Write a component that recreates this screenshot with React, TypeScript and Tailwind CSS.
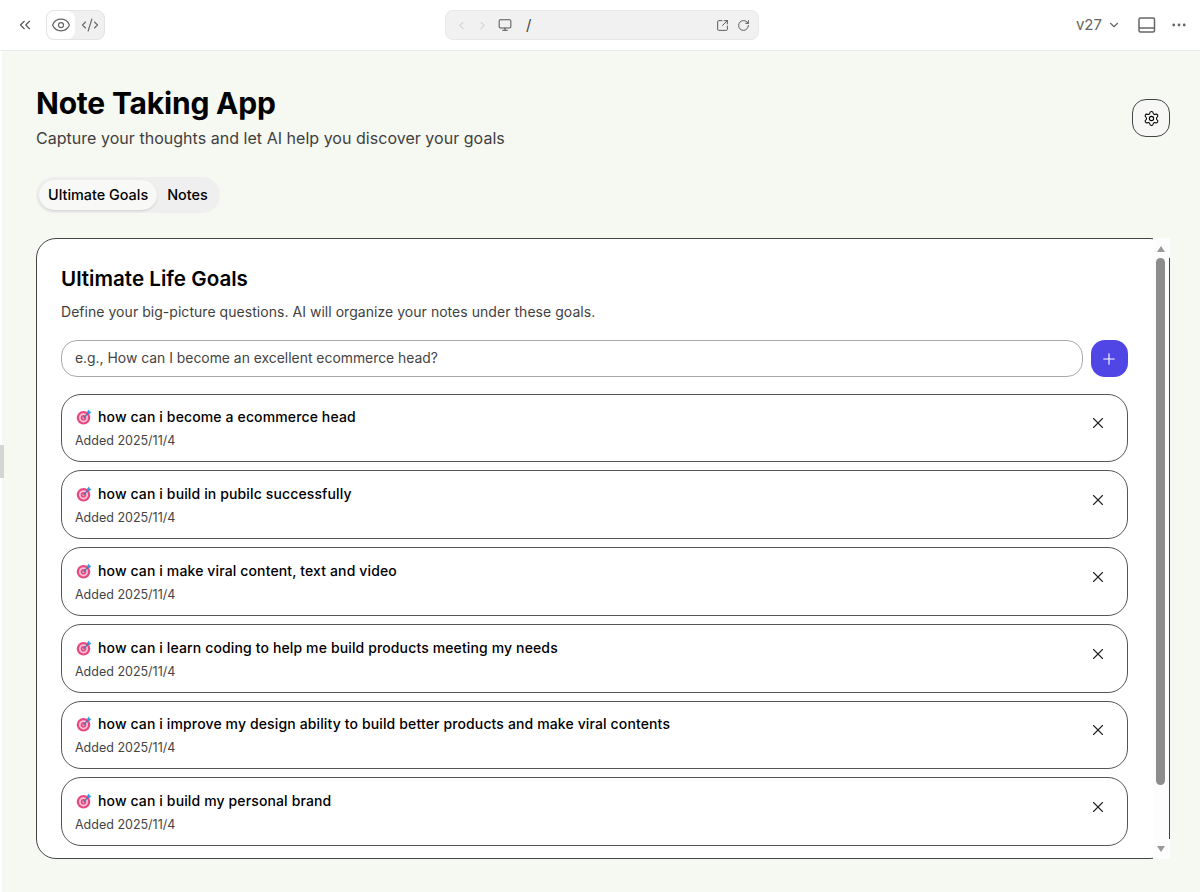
import { ChevronsLeft, Eye, CodeXml, ChevronLeft, ChevronRight, Monitor, SquareArrowOutUpRight, RotateCw, ChevronDown, Ellipsis, Settings, Plus, X } from "lucide-react";

const goals = [
  "how can i become a ecommerce head",
  "how can i build in pubilc successfully",
  "how can i make viral content, text and video",
  "how can i learn coding to help me build products meeting my needs",
  "how can i improve my design ability to build better products and make viral contents",
  "how can i build my personal brand",
];

function DartIcon() {
  return (
    <svg width="16" height="16" viewBox="0 0 16 16" className="ml-[1px] shrink-0">
      <circle cx="7.5" cy="8.8" r="6.8" fill="#e8487f" />
      <circle cx="7.5" cy="8.8" r="4.6" fill="#f7c3d6" />
      <circle cx="7.5" cy="8.8" r="2.8" fill="#e8487f" />
      <circle cx="7.5" cy="8.8" r="1.1" fill="#f7c3d6" />
      <path d="M7.5 8.8 13 3.2" stroke="#3f6fa8" strokeWidth="1.2" />
      <path d="M11.2 2.6 13 .6l.6 1.9 1.9.5-2 1.9-2.4-.5z" fill="#2f9be0" />
    </svg>
  );
}

function GoalRow({ title }: { title: string }) {
  return (
    <div className="flex h-[68.75px] items-center justify-between rounded-[20px] border border-[#555] bg-white pl-[13px] pr-[20px]">
      <div className="pt-[2px]">
        <div className="flex items-center gap-[6px] text-[14px] leading-[22px] font-medium tracking-[0.13px] text-black">
          <DartIcon />
          <span>{title}</span>
        </div>
        <div className="mt-[3px] text-[12.5px] leading-[20px] text-[#444]">Added 2025/11/4</div>
      </div>
      <X size={18} strokeWidth={1.5} className="mb-[9px] text-[#222]" />
    </div>
  );
}

function Toolbar() {
  return (
    <div className="grid h-[51px] grid-cols-[1fr_314px_1fr] items-center border-b border-[#ececec] bg-white pl-[16px] pr-[12px] text-[#666]">
      <div className="flex items-center gap-[12px]">
        <ChevronsLeft size={18} strokeWidth={1.5} className="text-[#555]" />
        <div className="flex h-[30px] rounded-lg border border-[#e4e4e4] bg-[#f0f0f0]">
          <div className="flex w-[28px] items-center justify-center rounded-lg bg-white">
            <Eye size={20} strokeWidth={1.5} />
          </div>
          <div className="flex w-[29px] items-center justify-center">
            <CodeXml size={18} strokeWidth={1.5} />
          </div>
        </div>
      </div>
      <div className="flex h-[30px] items-center rounded-lg border border-[#e8e8e8] bg-[#f1f1f1] pl-[9px] pr-[8px]">
        <ChevronLeft size={13} strokeWidth={1.5} className="text-[#bbb]" />
        <ChevronRight size={13} strokeWidth={1.5} className="ml-[8px] text-[#bbb]" />
        <Monitor size={14} strokeWidth={1.75} className="ml-[9px] text-[#555]" />
        <span className="ml-[14px] text-[15px] text-[#444]">/</span>
        <SquareArrowOutUpRight size={13} strokeWidth={1.75} className="ml-auto text-[#555]" />
        <RotateCw size={13} strokeWidth={1.75} className="ml-[8px] text-[#555]" />
      </div>
      <div className="flex items-center justify-end">
        <span className="text-[15px]">v27</span>
        <ChevronDown size={14} strokeWidth={2} className="ml-[5px]" />
        <svg width="18" height="16" viewBox="0 0 18 16" fill="none" stroke="currentColor" strokeWidth="1.5" className="ml-[17px]">
          <rect x="1" y="1" width="15.5" height="14" rx="1.5" />
          <path d="M1 11h15.5" />
        </svg>
        <Ellipsis size={18} strokeWidth={1.75} className="ml-[14px]" />
      </div>
    </div>
  );
}

function Scrollbar() {
  return (
    <div className="absolute top-[-1px] right-[-1px] bottom-[-1px] flex w-[17px] flex-col bg-[#fdfdfd]">
      <div className="flex h-[20px] items-center justify-center pr-[2px] pt-[1px]">
        <div className="h-0 w-0 border-x-[4px] border-b-[6px] border-x-transparent border-b-[#999]" />
      </div>
      <div className="flex-1 border-r border-[#444] pr-[2px] pb-[54px]">
        <div className="mx-auto h-full w-[9px] rounded-full bg-[#8c8c8c]" />
      </div>
      <div className="flex h-[20px] items-center justify-center pr-[2px] pb-[1px]">
        <div className="h-0 w-0 border-x-[4px] border-t-[6px] border-x-transparent border-t-[#999]" />
      </div>
    </div>
  );
}

export default function App() {
  return (
    <div className="h-[892px] overflow-hidden bg-white font-['Inter',sans-serif]">
      <Toolbar />
      <div className="relative ml-[2px] h-[841px] bg-[#f6f8f2] pl-[34px] pr-[30px] pt-[34px]">
        <div className="absolute top-[394px] left-[-2px] h-[33px] w-[4px] bg-[#d4d4d4]" />
        <div className="flex items-start justify-between">
          <div>
            <h1 className="text-[30px] leading-[36px] font-bold tracking-[-0.2px] text-black">Note Taking App</h1>
            <p className="mt-[5px] text-base leading-[24px] tracking-[0.03px] text-[#3f3f3f]">
              Capture your thoughts and let AI help you discover your goals
            </p>
          </div>
          <div className="mt-[14px] flex h-[38px] w-[38px] items-center justify-center rounded-[14px] border border-[#444] bg-[#f7f8f5]">
            <Settings size={17} strokeWidth={1.5} className="text-black" />
          </div>
        </div>
        <div className="mt-[27px] flex h-[36px] w-fit items-center rounded-[18px] bg-[#efeff0] pl-[3px] pr-[12px] text-[14.4px] font-medium text-black">
          <div className="flex h-[30px] items-center rounded-[15px] bg-[#f8f9f6] px-[9px] shadow-sm">Ultimate Goals</div>
          <div className="ml-[10px]">Notes</div>
        </div>
        <div className="relative mt-[25px] h-[621px] rounded-[20px] border border-[#444] bg-white pl-[24px] pr-[41px] pt-[26px]">
          <h2 className="text-[20.6px] leading-[28px] font-semibold text-black">Ultimate Life Goals</h2>
          <p className="mt-[9px] text-sm leading-[20px] tracking-[0.04px] text-[#3f3f3f]">
            Define your big-picture questions. AI will organize your notes under these goals.
          </p>
          <div className="mt-[18px] flex gap-[8px]">
            <div className="flex h-[37px] flex-1 items-center rounded-[16px] border border-[#aaa] bg-white px-[13px] text-[13.9px] text-[#444]">
              e.g., How can I become an excellent ecommerce head?
            </div>
            <div className="flex h-[37px] w-[37.5px] items-center justify-center rounded-[14px] bg-[#4f46e5]">
              <Plus size={18} strokeWidth={1.5} className="text-white" />
            </div>
          </div>
          <div className="mt-[16.5px] flex flex-col gap-[8px]">
            {goals.map((g) => (
              <GoalRow key={g} title={g} />
            ))}
          </div>
          <Scrollbar />
        </div>
      </div>
    </div>
  );
}
